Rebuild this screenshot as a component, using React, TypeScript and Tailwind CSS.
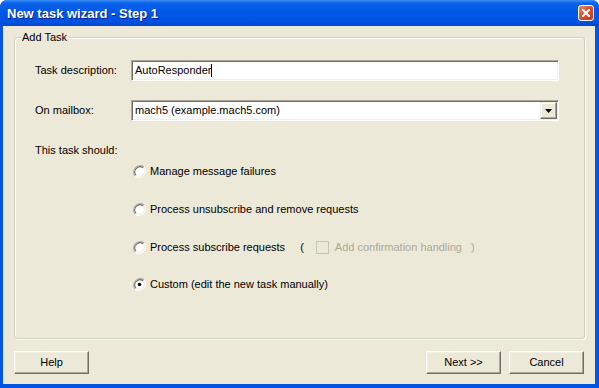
import React from "react";

const font = { fontFamily: '"Liberation Sans", Arial, sans-serif' };

function Radio({ checked }: { checked?: boolean }) {
  return (
    <svg width="13" height="13" viewBox="0 0 12 12" className="shrink-0">
      <path d="M10.2 1.8 A6 6 0 0 0 1.8 10.2" stroke="#ACA899" strokeWidth="1" fill="none" />
      <path d="M1.8 10.2 A6 6 0 0 0 10.2 1.8" stroke="#FFFFFF" strokeWidth="1" fill="none" />
      <circle cx="6" cy="6" r="4.7" fill="#FFFFFF" />
      <path d="M9.3 2.7 A4.7 4.7 0 0 0 2.7 9.3" stroke="#716F64" strokeWidth="1" fill="none" />
      <path d="M2.7 9.3 A4.7 4.7 0 0 0 9.3 2.7" stroke="#F1EFE2" strokeWidth="1" fill="none" />
      {checked && <circle cx="6" cy="6" r="1.6" fill="#000" />}
    </svg>
  );
}

function Button({ label, className = "" }: { label: string; className?: string }) {
  return (
    <button
      className={
        "w-[75px] h-[23px] bg-[#ECE9D8] text-[11px] text-black border border-t-white border-l-white border-r-[#716F64] border-b-[#716F64] shadow-[inset_-1px_-1px_0_#ACA899,inset_1px_1px_0_#F1EFE2] " +
        className
      }
    >
      {label}
    </button>
  );
}

export default function App() {
  return (
    <div
      className="w-[599px] h-[388px] flex flex-col bg-[#0055E5] rounded-t-[7px] overflow-hidden"
      style={font}
    >
      {/* Title bar */}
      <div className="h-[26px] shrink-0 flex items-center justify-between pl-[7px] pr-[5px] bg-[linear-gradient(to_bottom,#3D8EF7_0%,#0A62EA_12%,#0058E6_45%,#0054E3_80%,#0046D2_100%)]">
        <span className="text-white font-bold text-[13px] leading-none [text-shadow:1px_1px_0_#0A1E8C]">
          New task wizard - Step 1
        </span>
        <div className="w-[16px] h-[16px] mb-[1px] rounded-[3px] border border-white flex items-center justify-center bg-[linear-gradient(135deg,#E88A6C_0%,#D9522E_45%,#C23A1C_100%)]">
          <svg width="8" height="8" viewBox="0 0 8 8">
            <path d="M1 1 L7 7 M7 1 L1 7" stroke="#FFFFFF" strokeWidth="2" strokeLinecap="square" />
          </svg>
        </div>
      </div>

      {/* Body */}
      <div className="flex-1 ml-[3px] mr-[4px] mb-[4px] bg-[#ECE9D8] flex flex-col pl-[11px] pr-[10px] pt-[11px] pb-[10px] text-[11px] text-black">
        {/* Group box */}
        <div className="relative flex-1 flex flex-col border border-[#D0D0BF] rounded-[3px] shadow-[inset_1px_1px_0_#FFFFFF,1px_1px_0_#FFFFFF] pl-[20px] pr-[25px] pt-[22px]">
          <span className="absolute left-[6px] top-[-7px] px-[1px] bg-[#ECE9D8] leading-[13px]">
            Add Task
          </span>

          <div className="flex items-center h-[21px]">
            <span className="w-[96px] shrink-0">Task description:</span>
            <div className="flex-1 h-[21px] bg-white border border-t-[#ACA899] border-l-[#ACA899] border-r-white border-b-white shadow-[inset_1px_1px_0_#716F64,inset_-1px_-1px_0_#F1EFE2] flex items-center pl-[3px]">
              <span>AutoResponder</span>
              <span className="w-[1px] h-[13px] bg-black" />
            </div>
          </div>

          <div className="flex items-center h-[21px] mt-[19px]">
            <span className="w-[96px] shrink-0">On mailbox:</span>
            <div className="flex-1 h-[21px] bg-white border border-t-[#ACA899] border-l-[#ACA899] border-r-white border-b-white shadow-[inset_1px_1px_0_#716F64,inset_-1px_-1px_0_#F1EFE2] flex items-center pl-[3px] pr-[1px]">
              <span className="flex-1">mach5 (example.mach5.com)</span>
              <div className="w-[17px] h-[17px] bg-[#ECE9D8] border border-t-[#F1EFE2] border-l-[#F1EFE2] border-r-[#716F64] border-b-[#716F64] shadow-[inset_-1px_-1px_0_#ACA899,inset_1px_1px_0_#FFFFFF] flex items-center justify-center">
                <svg width="7" height="4" viewBox="0 0 7 4">
                  <path d="M0 0 H7 L3.5 4 Z" fill="#000" />
                </svg>
              </div>
            </div>
          </div>

          <div className="mt-[23px] leading-[13px]">This task should:</div>

          <div className="ml-[98px] flex flex-col">
            <div className="flex items-center h-[13px] mt-[8px] gap-[4px]">
              <Radio />
              <span>Manage message failures</span>
            </div>
            <div className="flex items-center h-[13px] mt-[25px] gap-[4px]">
              <Radio />
              <span>Process unsubscribe and remove requests</span>
            </div>
            <div className="flex items-center h-[13px] mt-[25px] gap-[4px]">
              <Radio />
              <span>Process subscribe requests</span>
              <span className="ml-[11px]">(</span>
              <div className="ml-[8px] w-[13px] h-[13px] border border-[#C6C3B4] bg-[#ECE9D8]" />
              <span className="ml-[2px] text-[#ACA899]">Add confirmation handling</span>
              <span className="ml-[5px] text-[#ACA899]">)</span>
            </div>
            <div className="flex items-center h-[13px] mt-[24px] gap-[4px]">
              <Radio checked />
              <span>Custom (edit the new task manually)</span>
            </div>
          </div>
        </div>

        {/* Buttons */}
        <div className="flex items-center mt-[12px]">
          <Button label="Help" />
          <div className="flex-1" />
          <Button label="Next >>" />
          <Button label="Cancel" className="ml-[8px] mr-[1px]" />
        </div>
      </div>
    </div>
  );
}
